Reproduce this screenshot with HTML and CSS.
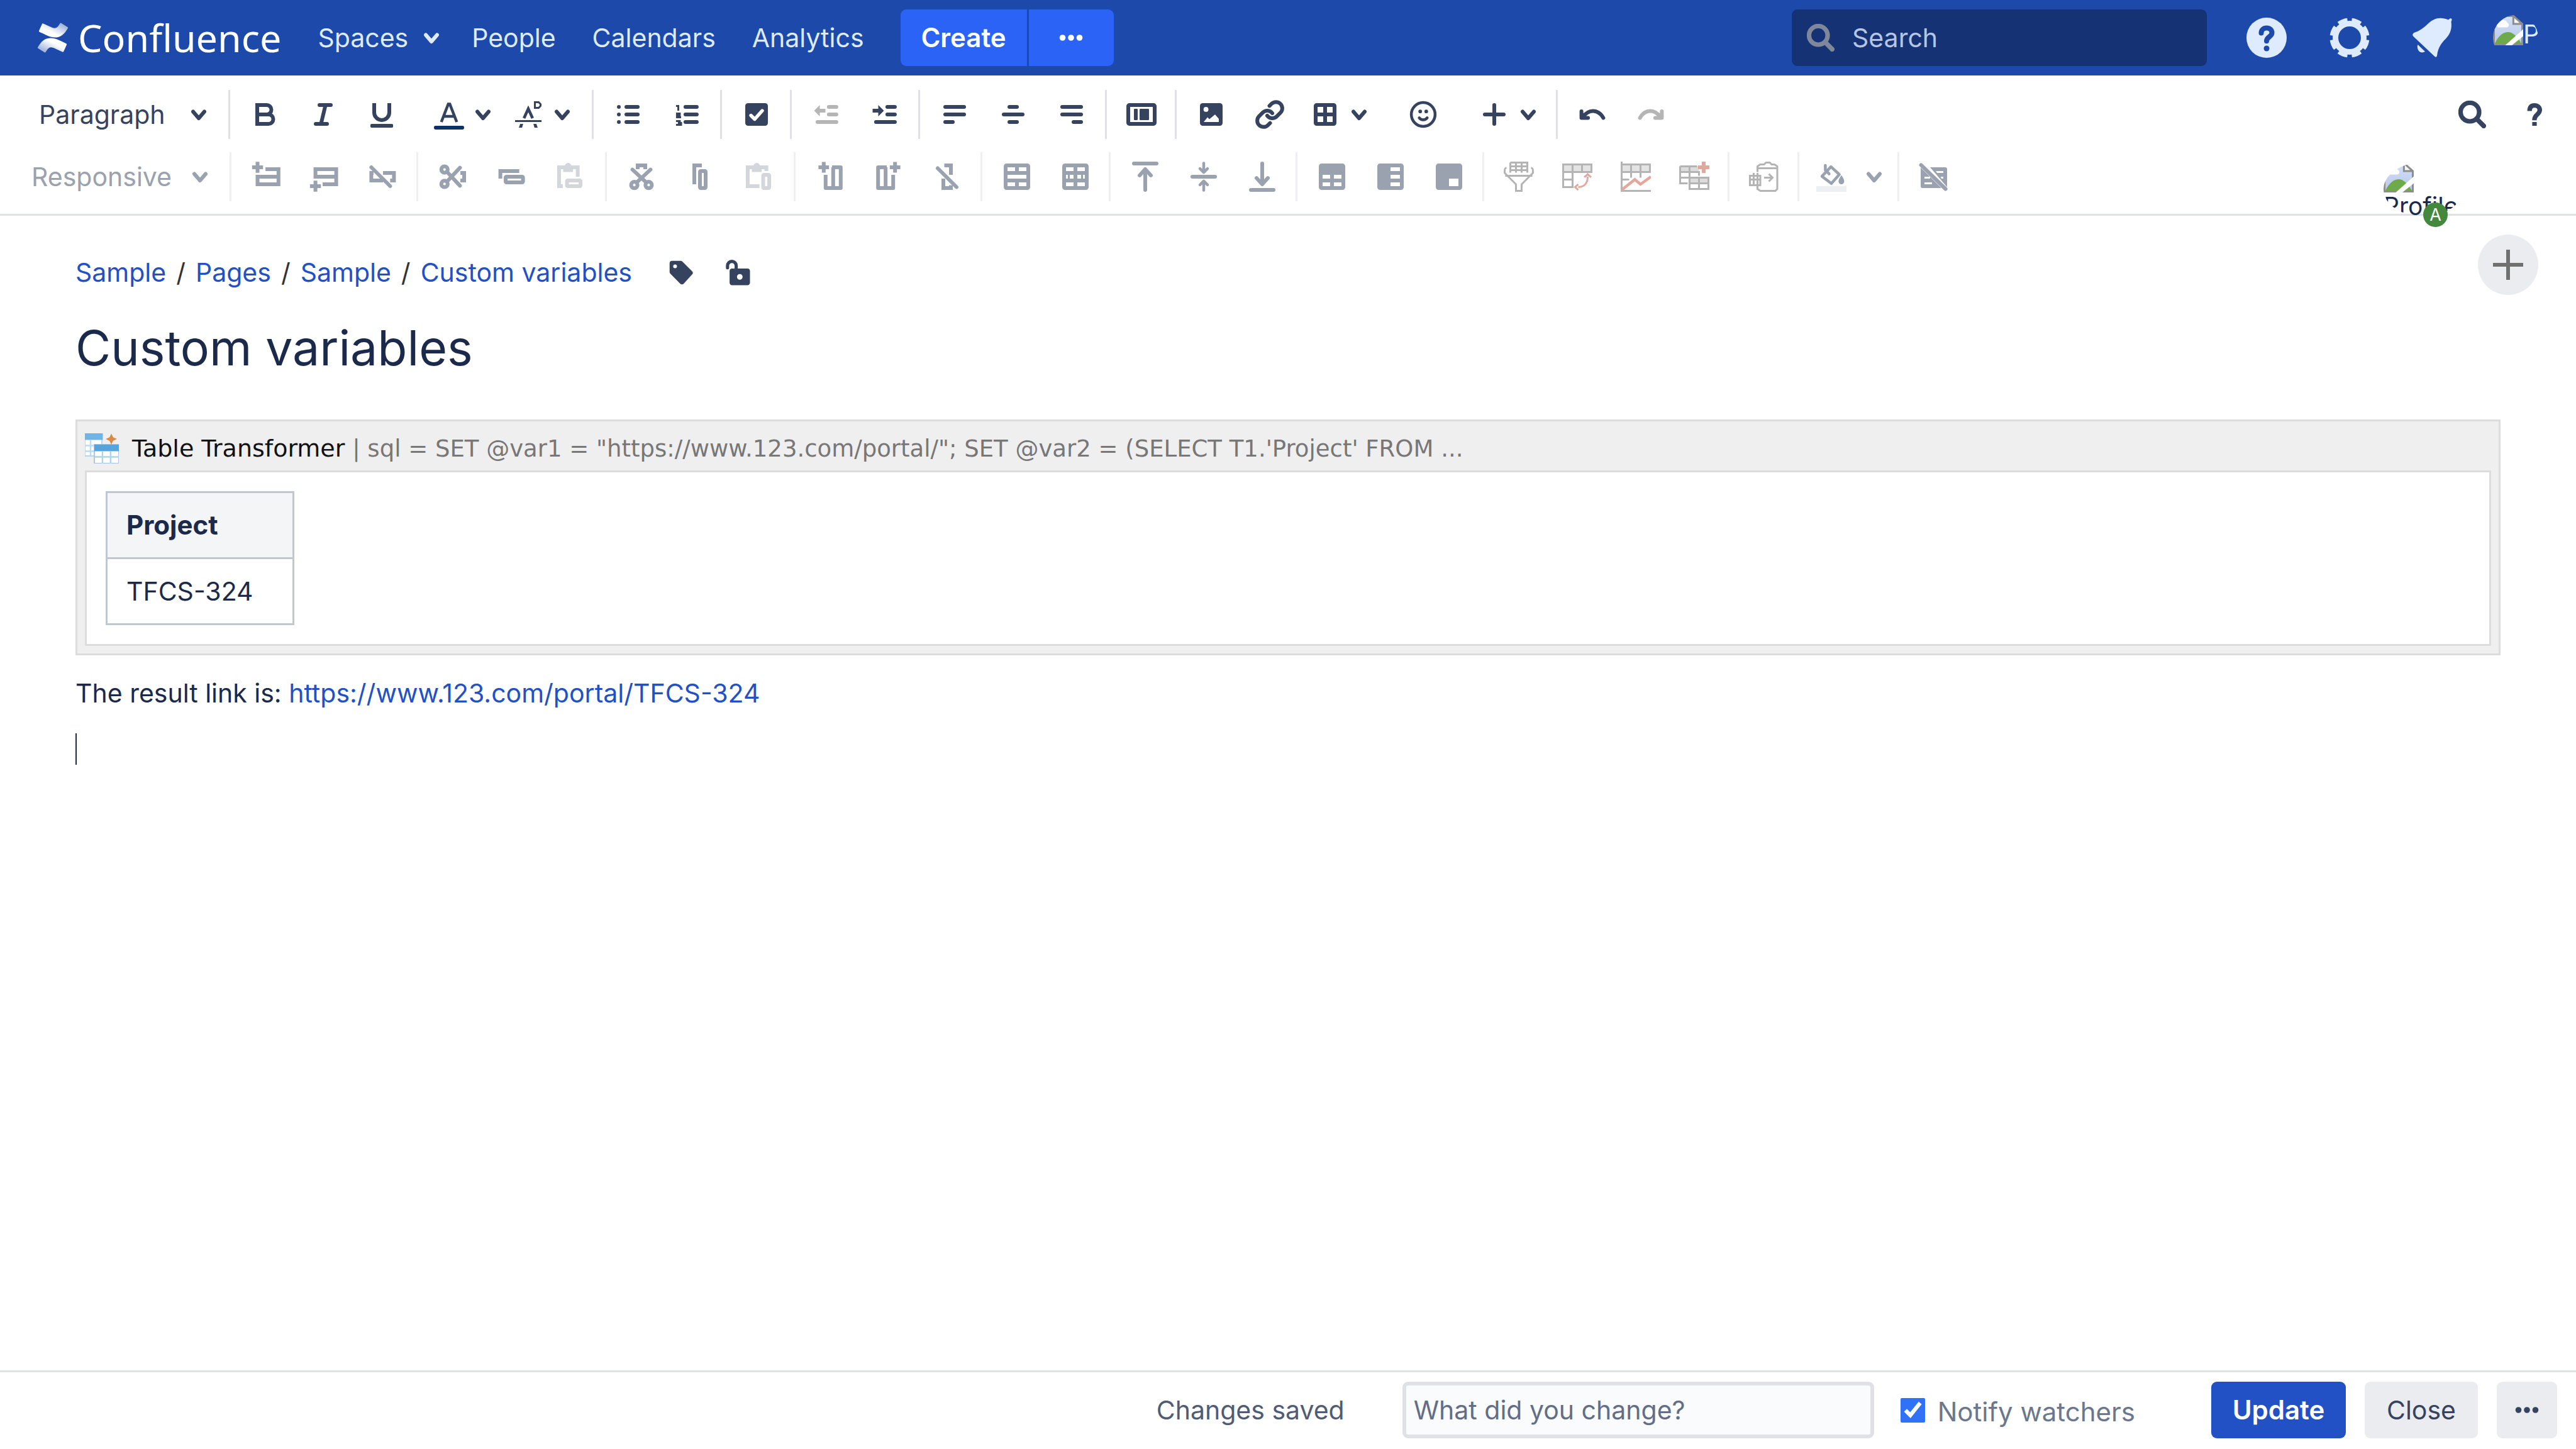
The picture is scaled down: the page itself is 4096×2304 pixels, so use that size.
FILE: index.html
```html
<!DOCTYPE html>
<html lang="en">
<head>
<meta charset="utf-8">
<title>Custom variables - Confluence</title>
<link rel="stylesheet" href="styles.css">
</head>
<body>
<svg class="sprite" aria-hidden="true">
  <defs>
    <linearGradient id="logo-a" x1="0" y1="1" x2="1" y2="0"><stop offset=".4" stop-color="#fff"/><stop offset="1" stop-color="#fff" stop-opacity=".45"/></linearGradient>
    <linearGradient id="logo-b" x1="1" y1="0" x2="0" y2="1"><stop offset=".4" stop-color="#fff"/><stop offset="1" stop-color="#fff" stop-opacity=".45"/></linearGradient>
    <linearGradient id="sky" x1="0" y1="0" x2="0" y2="1"><stop offset="0" stop-color="#d3e0f7"/><stop offset="1" stop-color="#b7c7e8"/></linearGradient>
  </defs>
  <symbol id="chevron" viewBox="0 0 8 8"><path d="M1 2.5 4 6 7 2.5" fill="none" stroke="currentColor" stroke-width="2" stroke-linecap="round" stroke-linejoin="round"/></symbol>
  <symbol id="search" viewBox="0 0 14 14"><circle cx="5.8" cy="5.8" r="4.7" fill="none" stroke="currentColor" stroke-width="2.3"/><path d="m10 10 2.8 2.8" stroke="currentColor" stroke-width="2.4" stroke-linecap="round"/></symbol>
  <symbol id="dots" viewBox="0 0 14 14"><circle cx="2.5" cy="7" r="1.6" fill="currentColor"/><circle cx="7" cy="7" r="1.6" fill="currentColor"/><circle cx="11.5" cy="7" r="1.6" fill="currentColor"/></symbol>
  <symbol id="scissors" viewBox="0 0 16 16"><g fill="none" stroke="currentColor" stroke-width="2"><circle cx="3.6" cy="4.2" r="1.7"/><circle cx="3.6" cy="11.8" r="1.7"/><path d="m4.9 5.4 6.9 7.4M4.9 10.6l6.9-7.4" stroke-linecap="round"/><path d="M12 6h2v4h-2"/></g></symbol>
  <symbol id="column-insert" viewBox="0 0 16 16"><g fill="none" stroke="currentColor" stroke-width="2"><path d="M4.6.2v5.600M1.800 3h5.600M9 3h4.600v11h-8V7M9.600 3v11" stroke-linejoin="round"/></g></symbol>
  <symbol id="broken-image" viewBox="0 0 16 16">
    <path d="M.5.5h10.300l4.700 4.200v10.800H.5z" fill="url(#sky)" stroke="#8d8d8d"/>
    <path d="M2.500 6.500a1.500 1.500 0 0 1 1-2.600 2.200 2.200 0 0 1 4 .1 1.300 1.300 0 0 1-.2 2.500z" fill="#fff"/>
    <path d="M1 15c2-4.200 4.500-6 7-6s5 2.500 7 6z" fill="#6dab4a"/>
    <path d="M16 7.500 6.500 16H10l6-4.800z" fill="#fff" class="tear"/>
    <path d="M10.800.5v4.200h4.700z" fill="#f6f6f6" stroke="#8d8d8d"/>
  </symbol>
</svg>

<header class="nav">
  <a class="logo" href="#">
    <svg viewBox="0 0 24 24" aria-hidden="true"><path fill="url(#logo-b)" d="M.87 18.257c-.248.382-.53.875-.763 1.245a.764.764 0 0 0 .255 1.040l4.965 3.054a.764.764 0 0 0 1.058-.26c.199-.332.454-.763.733-1.221 1.967-3.247 3.945-2.853 7.508-1.146l4.957 2.337a.764.764 0 0 0 1.028-.382l2.364-5.346a.764.764 0 0 0-.382-1c-1.660-.78-3.315-1.570-4.965-2.361C10.911 10.970 5.224 11.185.87 18.257z"/><path fill="url(#logo-a)" d="M23.131 5.743c.249-.405.531-.875.764-1.250a.764.764 0 0 0-.256-1.034L18.675.404a.764.764 0 0 0-1.058.26c-.195.335-.451.763-.734 1.225-1.966 3.246-3.945 2.850-7.508 1.146L4.437.694a.764.764 0 0 0-1.027.382L1.046 6.422a.764.764 0 0 0 .382 1c1.039.49 3.105 1.467 4.965 2.361 6.698 3.246 12.392 3.029 16.738-4.040z"/></svg>
    <span>Confluence</span>
  </a>
  <nav class="nav-links">
    <a href="#">Spaces<svg class="chev"><use href="#chevron"/></svg></a>
    <a href="#">People</a>
    <a href="#">Calendars</a>
    <a href="#">Analytics</a>
  </nav>
  <div class="create">
    <button type="button" class="create-main">Create</button>
    <button type="button" class="create-more" aria-label="Create from template"><svg class="dots"><use href="#dots"/></svg></button>
  </div>
  <label class="search">
    <svg aria-hidden="true"><use href="#search"/></svg>
    <input type="search" placeholder="Search" aria-label="Search">
  </label>
  <div class="nav-icons">
    <button type="button" aria-label="Help"><svg viewBox="0 0 64 64"><circle cx="32" cy="32" r="32" fill="currentColor"/><g fill="none" stroke="#1c49aa" stroke-width="8" stroke-linecap="round" stroke-linejoin="round"><path d="M23.500 24.500c0-5 3.700-8 8.500-8s8.500 3 8.500 7.700c0 6.300-8.500 6.300-8.500 13"/></g><circle cx="32" cy="49" r="4.500" fill="#1c49aa"/></svg></button>
    <button type="button" aria-label="Settings"><svg viewBox="0 0 64 64"><g fill="none" stroke="currentColor"><circle cx="32" cy="32" r="22.500" stroke-width="9"/><circle cx="32" cy="32" r="28" stroke-width="7" pathLength="176" stroke-dasharray="15 7" stroke-dashoffset="-3.500"/></g></svg></button>
    <button type="button" aria-label="Notifications"><svg viewBox="0 0 64 64"><path fill="currentColor" d="M2.500 24C0 26-.5 28 1.500 30l34 32c2 1.500 3 .5 3.500-1.500 2-14 7-20 14-27C60 26 63 18 61.500 6.500l1-2.500c.5-2-1-3.500-3-2.500L57 3.500C44-2 34 1 25.500 9 18 16 12 21 2.500 24zM8.500 43l11.500 11c-3 2-7 2-9.500-.5S7 46 8.500 43z"/></svg></button>
    <a class="avatar" href="#" aria-label="Profile menu"><svg><use href="#broken-image"/></svg><span>P</span></a>
  </div>
</header>

<div class="toolbar">
  <div class="row primary">
    <div class="picker">
      <select aria-label="Text style"><option>Paragraph</option></select>
      <svg class="chev"><use href="#chevron"/></svg>
    </div>
    <div class="group">
      <button type="button" aria-label="Bold"><svg viewBox="0 0 16 16"><path class="line" d="M4 3h5a2.500 2.500 0 0 1 0 5H4zM4 8h6a2.500 2.500 0 0 1 0 5H4z"/></svg></button>
      <button type="button" aria-label="Italic"><svg viewBox="0 0 16 16"><path class="line round" d="M6 3h6M4 13h6M9.200 3 6.800 13"/></svg></button>
      <button type="button" aria-label="Underline"><svg viewBox="0 0 16 16"><path class="line" d="M4 2v5a4 4 0 0 0 8 0V2"/><rect x="2" y="13" width="12" height="2" rx=".6"/></svg></button>
      <span class="splits">
        <button type="button" class="split" aria-label="Text colour"><svg viewBox="0 0 16 16"><path class="line thin" d="M3.900 12 7.600 2.500h.8L12.100 12M5 9h6"/><rect x="0" y="14" width="16" height="2" rx=".8" fill="#0f3163"/></svg><svg class="chev"><use href="#chevron"/></svg></button>
        <button type="button" class="split" aria-label="More formatting"><svg viewBox="0 0 16 16"><path d="M1 11h14v1H1zM3.700 13h1.600l-.6 2H3zM10.700 13h1.600l.7 2h-1.700z"/><path class="line thin" d="M5.700 10 8 5l2.300 5"/><path class="line hair" d="M11.500 1.500h2l1 1v1l-1 1h-2z"/></svg><svg class="chev"><use href="#chevron"/></svg></button>
      </span>
    </div>
    <div class="group">
      <button type="button" aria-label="Bullet list"><svg viewBox="0 0 16 16"><path class="line round" d="M7 4h6M7 8h6M7 12h6"/><circle cx="3" cy="4" r="1"/><circle cx="3" cy="8" r="1"/><circle cx="3" cy="12" r="1"/></svg></button>
      <button type="button" aria-label="Numbered list"><svg viewBox="0 0 16 16"><path class="line round" d="M7.300 4h6M7.300 8h6M7.300 12h6"/><path class="line hair" d="M2.300 3.500h1.200V6M2.300 7.500h2v1h-1.500v1h2.200M2.300 11.500h2v1h-1m1 0h.7v1H2.300"/></svg></button>
    </div>
    <div class="group">
      <button type="button" aria-label="Task list"><svg viewBox="0 0 16 16"><rect x="2" y="2" width="12" height="12" rx="1.500"/><path d="m5 8.500 2 2 4-4.500" fill="none" stroke="#fff" stroke-width="1.800" stroke-linecap="round" stroke-linejoin="round"/></svg></button>
    </div>
    <div class="group">
      <button type="button" class="off" aria-label="Outdent"><svg viewBox="0 0 16 16"><path class="line round" d="M9.300 4h4M9.300 8h4M3.300 12h10"/><path d="m1.500 6 3-3v2h3v2h-3v2z"/></svg></button>
      <button type="button" aria-label="Indent"><svg viewBox="0 0 16 16"><path class="line round" d="M9.300 4h4M9.300 8h4M3.300 12h10"/><path d="m7.500 6-3-3v2h-3v2h3v2z"/></svg></button>
    </div>
    <div class="group">
      <button type="button" aria-label="Align left"><svg viewBox="0 0 16 16"><path class="line round" d="M3 4h10M3 8h10M3 12h4"/></svg></button>
      <button type="button" aria-label="Align centre"><svg viewBox="0 0 16 16"><path class="line round" d="M6 4h4M3 8h10M6 12h4"/></svg></button>
      <button type="button" aria-label="Align right"><svg viewBox="0 0 16 16"><path class="line round" d="M3 4h10M3 8h10M9 12h4"/></svg></button>
    </div>
    <div class="group">
      <button type="button" aria-label="Page layout"><svg viewBox="0 0 16 16"><rect class="line" x="1" y="3" width="14" height="10" rx=".6"/><rect x="4" y="5" width="2" height="6" rx=".4"/><rect x="7" y="5" width="5" height="6" rx=".4"/></svg></button>
    </div>
    <div class="group insert">
      <button type="button" aria-label="Insert image"><svg viewBox="0 0 16 16"><rect x="2" y="2" width="12" height="12" rx="1.500"/><circle cx="5.200" cy="5.300" r="1.300" fill="#fff"/><path d="m4 12 2-2.500L7 10.500 10 8l2 2.300V12z" fill="#fff"/></svg></button>
      <button type="button" aria-label="Insert link"><svg viewBox="0 0 24 24"><path fill="none" stroke="currentColor" stroke-width="3" stroke-linecap="round" stroke-linejoin="round" d="M10 13a5 5 0 0 0 7.540.54l3-3a5 5 0 0 0-7.070-7.070l-1.720 1.710M14 11a5 5 0 0 0-7.540-.54l-3 3a5 5 0 0 0 7.070 7.070l1.710-1.710"/></svg></button>
      <button type="button" class="split" aria-label="Insert table"><svg viewBox="0 0 16 16"><path fill-rule="evenodd" d="M3.500 2h9A1.500 1.500 0 0 1 14 3.500v9a1.500 1.500 0 0 1-1.500 1.500h-9A1.500 1.500 0 0 1 2 12.500v-9A1.500 1.500 0 0 1 3.500 2zM4 4v3h3V4zM9 4v3h3V4zM4 9v3h3V9zM9 9v3h3V9z"/></svg><svg class="chev"><use href="#chevron"/></svg></button>
      <button type="button" class="emoji" aria-label="Insert emoji"><svg viewBox="0 0 16 16"><circle class="line thin" cx="8" cy="8" r="6.300"/><circle cx="6.400" cy="6.400" r=".95"/><circle cx="9.600" cy="6.400" r=".95"/><path class="line round thin" d="M5.900 9.800a2.600 2.600 0 0 0 4.200 0"/></svg></button>
      <button type="button" class="split" aria-label="Insert more content"><svg viewBox="0 0 16 16"><path class="line round" d="M8 3v10M3 8h10"/></svg><svg class="chev"><use href="#chevron"/></svg></button>
    </div>
    <div class="group last">
      <button type="button" aria-label="Undo"><svg viewBox="0 0 16 16"><path class="line round" d="M2.200 6.300v3.500h3.500M2.800 9.500C6 5 11 5 13.800 9.800"/></svg></button>
      <button type="button" class="off" aria-label="Redo"><svg viewBox="0 0 16 16"><path class="line round" d="M13.800 6.300v3.500h-3.500M13.200 9.500C10 5 5 5 2.200 9.800"/></svg></button>
    </div>
    <div class="tools">
      <button type="button" aria-label="Find and replace"><svg class="find"><use href="#search"/></svg></button>
      <button type="button" aria-label="Editor help"><svg viewBox="0 0 16 16"><path class="help-mark" d="M5.400 6.200C5.400 4.200 6.300 3.200 8 3.200s2.800 1 2.800 2.500C10.800 7.900 8 8.200 8 10.500v.6M8 12v2"/></svg></button>
    </div>
  </div>

  <div class="row table-tools">
    <div class="picker">
      <select aria-label="Table width"><option>Responsive</option></select>
      <svg class="chev"><use href="#chevron"/></svg>
    </div>
    <div class="group">
      <button type="button" aria-label="Insert row before"><svg viewBox="0 0 16 16"><path class="line" d="M3.500.1v5.800M.6 3h5.800M7.700 4h6.900v8H3.500V7M3.500 8h11.100"/></svg></button>
      <button type="button" aria-label="Insert row after"><svg viewBox="0 0 16 16"><path class="line" d="M3.200 10.100v5.800M.3 13h5.800M3.200 9V4h11v8H7M3.200 8h11"/></svg></button>
      <button type="button" aria-label="Remove row"><svg viewBox="0 0 16 16"><path class="line" d="M3 6H1.800v4H8M8 6h5.800v4h-2"/><path class="line round" d="m1.800 3 10 10"/></svg></button>
    </div>
    <div class="group wide">
      <button type="button" aria-label="Cut row"><svg><use href="#scissors"/></svg></button>
      <button type="button" aria-label="Copy row"><svg viewBox="0 0 16 16"><path class="line" d="M2.200 9V5h10"/><rect class="line" x="5" y="8" width="9.200" height="3" rx=".4"/></svg></button>
      <button type="button" class="off" aria-label="Paste row"><svg viewBox="0 0 16 16"><path class="line" d="M4.300 13h-2V3h9.900v5"/><path d="M4.500 2h5.200v3.500H4.500z"/><circle cx="7.100" cy="2.500" r="1.800"/><rect class="line" x="6.500" y="10" width="7.200" height="3" rx=".4"/></svg></button>
    </div>
    <div class="group wide">
      <button type="button" aria-label="Cut column"><svg class="turned"><use href="#scissors"/></svg></button>
      <button type="button" aria-label="Copy column"><svg viewBox="0 0 16 16"><path class="line" d="M5 12V2h4"/><rect class="line" x="8" y="5" width="3" height="9" rx=".4"/></svg></button>
      <button type="button" class="off" aria-label="Paste column"><svg viewBox="0 0 16 16"><path class="line" d="M8.500 13H2.300V3h9.900v2"/><path d="M4.500 2h5.200v3.500H4.500z"/><circle cx="7.100" cy="2.500" r="1.800"/><rect class="line" x="10.500" y="7" width="3.200" height="7" rx=".4"/></svg></button>
    </div>
    <div class="group">
      <button type="button" aria-label="Insert column before"><svg><use href="#column-insert"/></svg></button>
      <button type="button" aria-label="Insert column after"><svg class="mirrored"><use href="#column-insert"/></svg></button>
      <button type="button" aria-label="Remove column"><svg viewBox="0 0 16 16"><path class="line" d="M6 9v5h4v-1.500M6.500 2H10v5"/><path class="line round" d="m3 3.500 10 10"/></svg></button>
    </div>
    <div class="group">
      <button type="button" aria-label="Merge cells"><svg viewBox="0 0 16 16"><path fill-rule="evenodd" d="M2.500 1h11A1.500 1.500 0 0 1 15 2.500v11a1.500 1.500 0 0 1-1.500 1.500h-11A1.500 1.500 0 0 1 1 13.500v-11A1.500 1.500 0 0 1 2.500 1zM3 3v2h4V3zM9 3v2h4V3zM3 7v2h10V7zM3 11v2h4v-2zM9 11v2h4v-2z"/></svg></button>
      <button type="button" aria-label="Split cells"><svg viewBox="0 0 16 16"><path fill-rule="evenodd" d="M2.500 1h11A1.500 1.500 0 0 1 15 2.500v11a1.500 1.500 0 0 1-1.500 1.500h-11A1.500 1.500 0 0 1 1 13.500v-11A1.500 1.500 0 0 1 2.500 1zM3 3v2h4V3zM9 3v2h4V3zM3 7v2h1V7zM5 7v2h2V7zM9 7v2h2V7zM12 7v2h1V7zM3 11v2h4v-2zM9 11v2h4v-2z"/></svg></button>
    </div>
    <div class="group">
      <button type="button" aria-label="Align top"><svg viewBox="0 0 16 16"><path class="line round" d="M2 1h12M8 4.500V15M5 7.300l3-3.300 3 3.300"/></svg></button>
      <button type="button" aria-label="Align middle"><svg viewBox="0 0 16 16"><path class="line round" d="M2 8h12"/><path class="line round thin" d="M8 .8V5M6 3.700 8 5.700l2-2M8 15.200V11M6 12.300l2-2 2 2"/></svg></button>
      <button type="button" aria-label="Align bottom"><svg viewBox="0 0 16 16"><path class="line round" d="M2 15h12M8 1v10.500M5 8.700 8 12l3-3.300"/></svg></button>
    </div>
    <div class="group">
      <button type="button" aria-label="Heading row"><svg viewBox="0 0 16 16"><path fill-rule="evenodd" d="M2.500 1h11A1.500 1.500 0 0 1 15 2.500v11a1.500 1.500 0 0 1-1.500 1.500h-11A1.500 1.500 0 0 1 1 13.500v-11A1.500 1.500 0 0 1 2.500 1zM3 7v2h4V7zM9 7v2h4V7zM3 11v2h4v-2zM9 11v2h4v-2z"/></svg></button>
      <button type="button" aria-label="Heading column"><svg viewBox="0 0 16 16"><path fill-rule="evenodd" d="M2.500 1h11A1.500 1.500 0 0 1 15 2.500v11a1.500 1.500 0 0 1-1.500 1.500h-11A1.500 1.500 0 0 1 1 13.500v-11A1.500 1.500 0 0 1 2.500 1zM8 3v2h5V3zM8 7v2h5V7zM8 11v2h5v-2z"/></svg></button>
      <button type="button" aria-label="Numbering column"><svg viewBox="0 0 16 16"><path fill-rule="evenodd" d="M2.500 1h11A1.500 1.500 0 0 1 15 2.500v11a1.500 1.500 0 0 1-1.500 1.500h-11A1.500 1.500 0 0 1 1 13.500v-11A1.500 1.500 0 0 1 2.500 1zM8 9v4h5V9z"/></svg></button>
    </div>
    <div class="group addon">
      <button type="button" aria-label="Table filter"><svg viewBox="0 0 16 16"><path class="line hair" d="M3.500.5h9v5.300M3.500.5v5.300M3.500 2.500h9M3.500 4.500h9M6.500.5v5.300M9.500.5v5.300M1.500 3.200C.5 3.500.5 4 .5 6l6 6v3.500h3V12l6-6c0-2 0-2.500-1-2.800M.8 7.500h14.400"/></svg></button>
      <button type="button" aria-label="Pivot table"><svg viewBox="0 0 16 16"><path d="M.5 1.500h15v4H.5z" fill="#e3e3e3"/><path class="line hair" d="M.5 1.500h15v4H.5zM5.500 1.500v12h-5v-12M10.500 1.500v4M.5 9.500h5"/><path class="accent" d="M13.500 8c0 3-1.500 5.500-5 5.500M11.700 8.300l1.800-1.600 1.800 1.600M8.500 15l-1.700-1.500L8.500 12"/></svg></button>
      <button type="button" aria-label="Chart from table"><svg viewBox="0 0 16 16"><path d="M.5 1.500h15v4H.5z" fill="#e3e3e3"/><path class="line hair" d="M.5 0v16M.5 1.500H16M.5 5.500H16M5.500 1.500v7M10.500 1.500v7M15.500 1.500v4M.5 9.500h4M.5 15.500H16"/><path class="accent bold" d="m.5 15 7-5.500 3 2.500L16 8"/></svg></button>
      <button type="button" aria-label="Transform table"><svg viewBox="0 0 16 16"><path d="M.5 2.500h10v3H.5zM5.500 8.500h10v3h-10z" fill="#dcdcdc"/><path class="line hair" d="M.5 2.500h9M.5 2.500v9h4M.5 5.500h10v2M.5 8.500h5M5.500 2.500v6M5.500 8.500h10v6h-10zM5.500 11.500h10M10.500 8.500v6"/><path class="accent bold plus" d="M13 0v6M10 3h6"/></svg></button>
    </div>
    <div class="group addon">
      <button type="button" aria-label="Paste as table"><svg viewBox="0 0 16 16"><path class="line hair" d="M4.500 5.500v-3l1.500-1h2l1-1h2l1 1h1.500l1.500 1v12l-1 1H6l-1.500-1v-2M4.500 3.500h11M.5 7v6M2.500 6v7M4.500 6v7M6 7v6M0 7.500h6.500M0 9.500h6.500M0 12.500h6.500"/><path class="line hair" d="M8 8.500h4M10.500 6.500l2 2-2 2"/></svg></button>
    </div>
    <div class="group">
      <button type="button" class="split flush" aria-label="Cell background"><svg viewBox="0 0 16 16"><rect x="0" y="13" width="16" height="3" fill="#edeff2"/><path class="line round thin" d="M4.800 2v2.500M7.800 2.700 12.200 6.800 8 11.600 3 7.800zM5 4.500 6.800 6.500"/><path d="M13.300 7.200c1 1.500 1.500 2.300 1.500 3.300a1.500 1.500 0 0 1-3 0c0-1 .6-1.800 1.500-3.300z"/></svg><svg class="chev"><use href="#chevron"/></svg></button>
    </div>
    <div class="group last">
      <button type="button" aria-label="Remove table"><svg viewBox="0 0 16 16"><path d="M6 3h8a1 1 0 0 1 1 1v9.500zM1 3.200 12 14H2a1 1 0 0 1-1-1z"/><path d="M9 5h4v1H9.700zM11.500 8H13v1h-1zM3 8h3v1H3zM3 11h4v1H3z" fill="#fff"/><path class="line round" d="m1.200 1.800 13 12.700"/></svg></button>
    </div>
  </div>

  <div class="collaborator">
    <div class="profile"><svg><use href="#broken-image"/></svg><span>Profile</span></div>
    <span class="badge">A</span>
  </div>
</div>

<main class="page">
  <button type="button" class="invite" aria-label="Invite people"><svg viewBox="0 0 48 48"><path d="M24 0v48M0 24h48" fill="none" stroke="#707070" stroke-width="6"/></svg></button>
  <nav class="crumbs">
    <a href="#">Sample</a><span>/</span><a href="#">Pages</a><span>/</span><a href="#">Sample</a><span>/</span><a href="#">Custom variables</a>
    <button type="button" class="tag" aria-label="Labels"><svg viewBox="0 0 14 14"><path fill-rule="evenodd" d="M.9 2.200C.9 1.400 1.400.9 2.200.9h4.400c.5 0 .8.1 1.200.5l5 5c.6.600.6 1.200 0 1.800l-4.400 4.800c-.6.600-1.300.6-1.900 0L1.400 7.800c-.4-.4-.5-.7-.5-1.200zM3.800 2.800a1 1 0 1 0 0 2 1 1 0 0 0 0-2z"/></svg></button>
    <button type="button" class="lock" aria-label="Restrictions"><svg viewBox="0 0 14 14"><path d="M1.600 4.600V3.500a2.300 2.300 0 0 1 4.600 0V6" fill="none" stroke="currentColor" stroke-width="1.700" stroke-linecap="round"/><path fill-rule="evenodd" d="M4 5h8.200c.8 0 1.300.5 1.300 1.300v6.200c0 .8-.5 1.300-1.300 1.300H4c-.8 0-1.300-.5-1.300-1.300V6.300C2.700 5.500 3.200 5 4 5zm4.100 2.900a1.500 1.500 0 1 0 0 3 1.500 1.500 0 0 0 0-3z"/></svg></button>
  </nav>
  <h1>Custom variables</h1>
  <section class="macro">
    <div class="macro-title">
      <svg viewBox="0 0 18 16" aria-hidden="true"><path d="M0 0h9v12H0z" fill="#fff" stroke="#b7d3ee" stroke-width=".6"/><path d="M0 0h9.500v3.500H0z" fill="#6fb4e4"/><path d="M0 6.500h5M0 9.500h5M3 3.500v8.500" stroke="#b7dcf3" stroke-width=".8"/><path d="M5 6h13v10H5z" fill="#fff" stroke="#a9bfe2" stroke-width=".6"/><path d="M5 6h13v3.500H5z" fill="#57a4dc"/><path d="M5 12.500h13M9.300 9.500V16M13.600 9.500V16" stroke="#a9d8ee" stroke-width=".8"/><path d="m14 .2 1 2 2 .8-2 .9-1 2-1-2-2-.9 2-.8z" fill="#d98a45"/></svg>
      <span><b>Table Transformer</b> | sql = SET @var1 = "https://www.123.com/portal/"; SET @var2 = (SELECT T1.'Project' FROM ...</span>
    </div>
    <div class="macro-body">
      <table>
        <thead><tr><th>Project</th></tr></thead>
        <tbody><tr><td>TFCS-324</td></tr></tbody>
      </table>
    </div>
  </section>
  <p>The result link is: <a href="#">https://www.123.com/portal/TFCS-324</a></p>
  <p class="caret-line"><i class="caret"></i></p>
</main>

<footer class="savebar">
  <span class="status">Changes saved</span>
  <input type="text" class="comment" placeholder="What did you change?" aria-label="Version comment">
  <input type="checkbox" id="notify" checked>
  <label for="notify">Notify watchers</label>
  <button type="button" class="update">Update</button>
  <button type="button" class="plain close">Close</button>
  <button type="button" class="plain more" aria-label="More actions"><svg class="dots"><use href="#dots"/></svg></button>
</footer>
</body>
</html>
```
FILE: styles.css
```css
* { box-sizing: border-box; }

:root {
  --ink: #1b2a4b;
  --icon: #36435f;
  --muted: #9aa1af;
  --link: #2151c5;
  --rule: #dfe1e6;
  --nav: #1c49aa;
}

body {
  margin: 0;
  min-height: 100vh;
  display: flex;
  flex-direction: column;
  background: #fff;
  color: var(--ink);
  font: 41px/60px Inter, "Liberation Sans", sans-serif;
}

button, input, select { font: inherit; color: inherit; }
button { border: 0; padding: 0; background: none; display: flex; align-items: center; justify-content: center; }
a { color: var(--link); text-decoration: none; }
svg { display: block; flex: none; fill: currentColor; }
.sprite { position: absolute; width: 0; height: 0; }
.chev { width: 24px; height: 24px; }
.dots { width: 42px; height: 42px; }

/* Top navigation */
.nav {
  height: 120px;
  padding: 0 60px;
  display: flex;
  align-items: center;
  background: var(--nav);
  color: #deebff;
}
.nav a { color: inherit; }
.logo { display: flex; align-items: center; gap: 16px; margin-right: 58px; }
.logo svg { width: 48px; height: 48px; }
.logo span { font: 61px/84px "Noto Sans", sans-serif; color: #fff; }
.nav-links { display: flex; gap: 58px; }
.nav-links a { display: flex; align-items: center; }
.nav-links a:first-child { gap: 25px; margin-right: -6px; }
.create { display: flex; gap: 3px; margin-left: 58px; }
.create button { height: 90px; background: #2a63f6; color: #fff; font-size: 42px; font-weight: 600; }
.create-main { width: 201px; border-radius: 9px 0 0 9px; }
.create-more { width: 135px; border-radius: 0 9px 9px 0; }
.search {
  width: 660px;
  height: 90px;
  margin-left: auto;
  padding: 0 24px;
  display: flex;
  align-items: center;
  gap: 28px;
  border-radius: 9px;
  background: #143274;
}
.search svg { width: 44px; height: 44px; color: #7f879b; }
.search input { flex: 1; min-width: 0; border: 0; padding: 0; background: none; outline: 0; }
.search input::placeholder { color: #b6c5e4; opacity: 1; }
.nav-icons { display: flex; align-items: center; gap: 68px; margin-left: 63px; }
.nav-icons button svg { width: 64px; height: 64px; }
.avatar { width: 72px; height: 72px; margin-left: -4px; border-radius: 50%; overflow: hidden; display: flex; align-items: flex-start; }
.avatar svg { width: 48px; height: 48px; }
.avatar .tear { fill: var(--nav); }

/* Editor toolbar */
.toolbar { position: relative; padding: 12px 0 10px; border-bottom: 3px solid var(--rule); }
.row { display: flex; align-items: center; height: 99px; color: var(--icon); }
.table-tools { color: var(--muted); }
.picker {
  display: grid;
  align-items: center;
  width: 366px;
  height: 78px;
  border-right: 3px solid var(--rule);
}
.picker select { grid-area: 1 / 1; appearance: none; border: 0; margin: 0; padding: 0 0 0 62px; background: none; height: 78px; }
.picker .chev { grid-area: 1 / 1; justify-self: end; margin-right: 35px; pointer-events: none; }
.table-tools .picker { width: 368px; border-color: #edeff2; }
.table-tools .picker select { padding-left: 50px; }
.group {
  display: flex;
  align-items: center;
  height: 78px;
  padding: 0 7px 0 8px;
  border-right: 3px solid var(--rule);
}
.table-tools .group { border-color: #edeff2; }
.group.wide { padding-right: 10px; }
.group.insert { padding: 0 14px 0 8px; }
.row .group.last { border: 0; }
.group button { width: 93px; height: 78px; }
.group svg { width: 48px; height: 48px; }
.group .split { width: 126px; gap: 18px; }
.group .split .chev { width: 24px; height: 24px; }
.group .flush { width: 141px; gap: 32px; }
.group .emoji { margin: 0 25px; }
.splits { display: flex; padding: 0 10px 0 19px; }
.group .off { color: #b5b5b5; }
.table-tools .off { color: #d3d6da; }
.addon { color: #b4b4b4; }
.turned { transform: rotate(-90deg); }
.mirrored { transform: scaleX(-1); }

.line { fill: none; stroke: currentColor; stroke-width: 2; }
.thin { stroke-width: 1.5; }
.hair { stroke-width: 1; }
.round { stroke-linecap: round; stroke-linejoin: round; }
.accent { fill: none; stroke: #e2a79d; stroke-width: 1; }
.accent.bold { stroke-width: 1.5; }
.accent.plus { stroke-width: 2; }
.help-mark { fill: none; stroke: currentColor; stroke-width: 2.4; }

.tools { display: flex; align-items: center; margin-left: auto; padding-right: 42px; gap: 53px; }
.tools svg { width: 48px; height: 48px; }
.tools .find { width: 44px; height: 44px; }

/* Collaborator picture hanging over the toolbar edge */
.collaborator { position: absolute; right: 180px; bottom: -4px; }
.profile { width: 126px; height: 86px; border-radius: 50%; overflow: hidden; }
.profile svg { width: 48px; height: 48px; }
.profile span { display: block; font-size: 39px; line-height: 44px; }
.badge {
  position: absolute;
  left: 63px;
  top: 64px;
  width: 39px;
  height: 39px;
  border-radius: 50%;
  background: #43883c;
  color: #fff;
  font-size: 27px;
  line-height: 40px;
  text-align: center;
}
.tear { fill: #fff; }

/* Page content */
.page { position: relative; flex: 1; padding: 60px 120px; }
.invite {
  position: absolute;
  top: 30px;
  right: 60px;
  width: 96px;
  height: 96px;
  border-radius: 50%;
  background: #ebecf0;
}
.invite svg { width: 48px; height: 48px; }
.crumbs { display: flex; align-items: center; }
.crumbs span { margin: 0 16px; color: #333; }
.crumbs button { color: var(--icon); }
.crumbs button svg { width: 42px; height: 42px; }
.tag { margin-left: 57px; }
.lock { margin-left: 48px; }
h1 { margin: 42px 0 0; font-size: 77px; line-height: 96px; font-weight: 400; }
.macro { margin-top: 66px; padding: 0 12px 12px; border: 3px solid #dcdcdc; background: #efefef; }
.macro-title { display: flex; align-items: center; gap: 21px; height: 78px; padding-top: 8px; }
.macro-title svg { width: 54px; height: 48px; }
.macro-title span { font-family: "DejaVu Sans", sans-serif; font-size: 37px; color: #777; }
.macro-title b { font-size: 38px; font-weight: 400; color: #111; }
.macro-body { padding: 30px; border: 3px solid #dcdcdc; background: #fff; }
table { border-collapse: collapse; }
th, td { width: 297px; height: 105px; padding: 0 30px; border: 3px solid #c1c7d0; text-align: left; }
th { background: #f4f5f7; font-size: 42px; font-weight: 700; }
p { margin: 30px 0 0; }
.caret { display: block; width: 2px; height: 50px; background: var(--ink); }
.caret-line { padding-top: 4px; }

/* Save bar */
.savebar {
  display: flex;
  align-items: center;
  justify-content: flex-end;
  padding: 15px 30px 17px;
  border-top: 3px solid var(--rule);
}
.status { margin-right: 92px; color: #505c75; }
.comment {
  width: 750px;
  height: 90px;
  padding: 0 12px;
  border: 6px solid var(--rule);
  border-radius: 9px;
  background: #fafbfc;
}
.comment::placeholder { color: #626e88; opacity: 1; }
#notify { width: 39px; height: 39px; margin: 0 20px 0 42px; accent-color: #3072f6; }
.savebar label { padding-top: 6px; font-size: 42px; color: #6b778c; }
.savebar button { height: 90px; border-radius: 9px; }
.update { width: 214px; margin-left: 121px; background: var(--link); color: #fff; font-size: 42px; font-weight: 600; }
.plain { margin-left: 30px; background: #ebecf0; color: var(--icon); }
.close { width: 180px; }
.more { width: 96px; }
```
